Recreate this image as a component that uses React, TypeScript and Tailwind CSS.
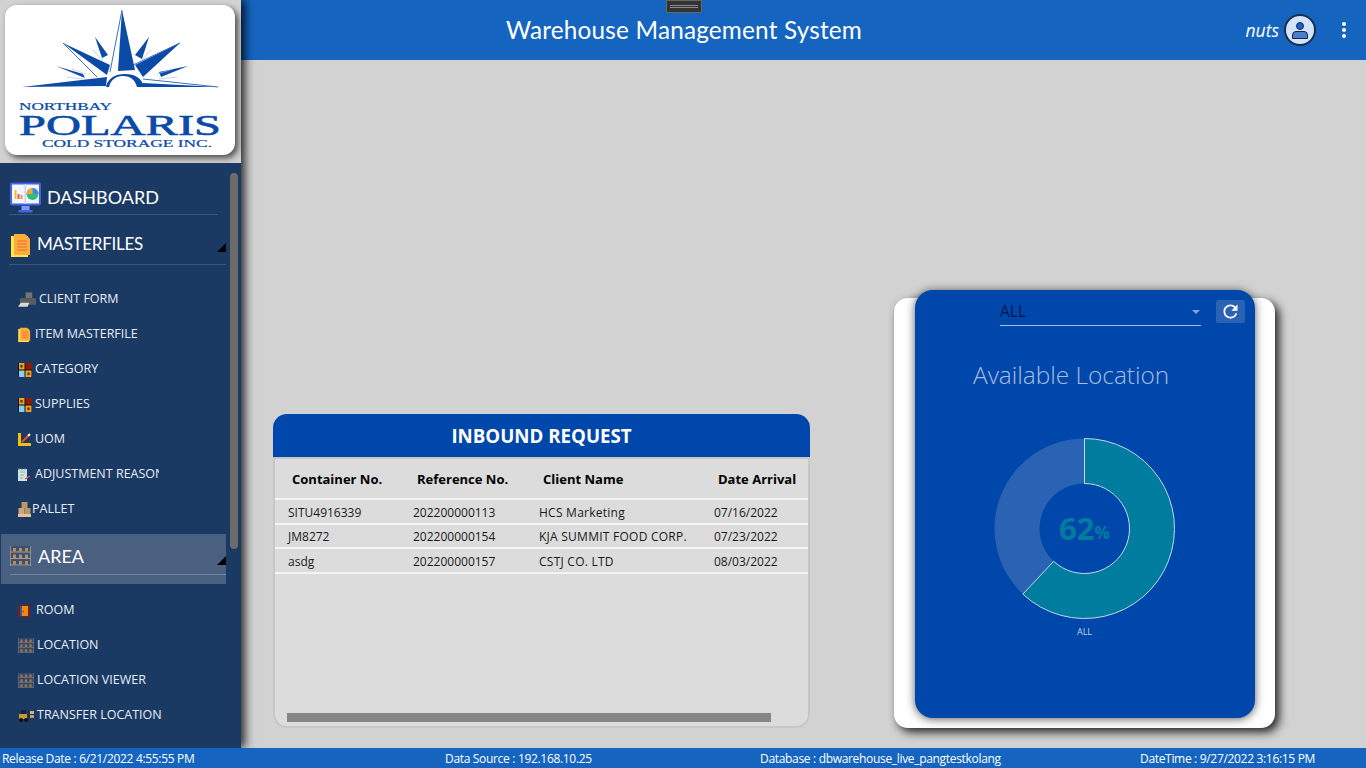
import { MdRefresh } from 'react-icons/md';

const ui = "font-['Open_Sans','Noto_Sans',sans-serif]";
const gothic = "font-['Lato','Noto_Sans',sans-serif]";

const inboundRows = [
  { container: 'SITU4916339', reference: '202200000113', client: 'HCS Marketing', arrival: '07/16/2022' },
  { container: 'JM8272', reference: '202200000154', client: 'KJA SUMMIT FOOD CORP.', arrival: '07/23/2022' },
  { container: 'asdg', reference: '202200000157', client: 'CSTJ CO. LTD', arrival: '08/03/2022' },
];

function Logo() {
  return (
    <svg viewBox="0 0 230 150" className="w-full h-full">
      <g fill="#0b4ba8">
        <polygon points="117,5 130,65 113,66" />
        <polygon points="58,38 105,60 102,70" />
        <polygon points="175,38 130,60 138,72" />
        <polygon points="90,32 103,50 97,53" />
        <polygon points="144,32 130,50 137,54" />
        <polygon points="51,61 78,69 80,73" />
        <polygon points="183,61 154,67 156,72" />
        <polygon points="17,82 102,72 101,81" />
        <polygon points="138,78 213,82 138,82" />
        <path d="M101 82 C103 73 110 69 120 69 C130 69 137 73 139 82 L132 82 C130 75 126 71 118 71 C110 71 106 75 104 82 Z" />
      </g>
      <g fill="none" stroke="#0b4ba8" strokeWidth="0.8">
        <path d="M117 5 L105 67 M58 38 L92 72 M175 38 L128 60 M138 74 L213 82" />
      </g>
      <g fill="none" stroke="#a9c1e6" strokeWidth="0.7">
        <path d="M88 45 L98 56 M146 45 L136 56 M67 64 L81 69 M168 64 L152 69 M62 72 L78 74 M172 72 L154 74" />
      </g>
      <g fontFamily="'Liberation Serif', serif" fill="#0b4ba8" stroke="#0b4ba8">
        <text x="14" y="105" fontSize="10" strokeWidth="0.2" textLength="93" lengthAdjust="spacingAndGlyphs">NORTHBAY</text>
        <text x="14" y="130" fontSize="30" strokeWidth="0.6" textLength="202" lengthAdjust="spacingAndGlyphs">POLARIS</text>
        <text x="37" y="142" fontSize="10" strokeWidth="0.2" textLength="170" lengthAdjust="spacingAndGlyphs">COLD STORAGE INC.</text>
      </g>
    </svg>
  );
}

function MonitorIcon() {
  return (
    <svg viewBox="0 0 32 31" className="w-[33px] h-[31px] shrink-0">
      <rect x="0.5" y="0.5" width="31" height="23" rx="2" fill="#4660e6" />
      <rect x="2.5" y="2.5" width="27" height="19" fill="#f2f4ff" />
      <rect x="15" y="2" width="1.5" height="20" fill="#c9d2f5" />
      <rect x="5" y="8" width="2" height="9" fill="#e9c23a" />
      <rect x="8" y="12" width="2" height="5" fill="#e5604a" />
      <rect x="11" y="13" width="2" height="4" fill="#e09a4c" />
      <circle cx="23" cy="12" r="6" fill="#2ebd75" />
      <path d="M23 12 V6 A6 6 0 0 1 29 12 Z" fill="#4a82e0" />
      <path d="M23 12 H17 A6 6 0 0 1 23 6 Z" fill="#f0a93a" />
      <rect x="12" y="24" width="8" height="4" fill="#7f9bf5" />
      <rect x="9" y="28" width="14" height="2.5" fill="#4660e6" />
    </svg>
  );
}

function NoteIcon({ big }: { big?: boolean }) {
  return (
    <svg viewBox="0 0 20 24" className={big ? 'w-[20px] h-[24px] shrink-0' : 'w-[13px] h-[15px] shrink-0'}>
      <rect x="0" y="3" width="17" height="21" fill="#ffe34d" />
      <path d="M3 1 H14 L19 6 V22 H3 Z" fill="#fbae3c" />
      <path d="M6 8 H16 M6 11 H16 M6 14 H16 M6 17 H16" stroke="#f0663c" strokeWidth="1.2" />
    </svg>
  );
}

function GridBoxIcon() {
  return (
    <svg viewBox="0 0 14 14" className="w-[14px] h-[14px] shrink-0">
      <rect width="14" height="14" fill="#101018" />
      <rect x="1" y="0" width="5.5" height="6.5" fill="#f0a020" />
      <rect x="2.5" y="2" width="2" height="2.5" fill="#3a2a10" />
      <rect x="7.5" y="0" width="6.5" height="6.5" fill="#8c1c08" />
      <rect x="1" y="7.5" width="5.5" height="6.5" fill="#86d0f4" />
      <rect x="7.5" y="7.5" width="6" height="6.5" fill="#f0a020" />
      <rect x="9.5" y="9.5" width="2" height="2.5" fill="#3a2a10" />
    </svg>
  );
}

function PrinterIcon() {
  return (
    <svg viewBox="0 0 20 16" className="w-[19px] h-[16px] shrink-0">
      <rect x="8" y="0" width="7" height="6" fill="#747474" />
      <path d="M2 6 H19 V13 H2 Z" fill="#5c5c5c" />
      <path d="M0 15 L3 11 H12 L10 15 Z" fill="#d8d8d8" />
    </svg>
  );
}

function RulerIcon() {
  return (
    <svg viewBox="0 0 13 13" className="w-[13px] h-[13px] shrink-0">
      <path d="M0 0 H3 V10 H13 V13 H0 Z" fill="#f2be10" />
      <path d="M4 9 L11 2" stroke="#e5502f" strokeWidth="2" />
      <path d="M10 3 L12 1" stroke="#f4f4f4" strokeWidth="2" />
    </svg>
  );
}

function ClipboardIcon() {
  return (
    <svg viewBox="0 0 13 13" className="w-[13px] h-[13px] shrink-0">
      <rect x="0" y="1" width="9" height="12" fill="#cfe3e6" />
      <path d="M1 0 V2 M4 0 V2 M7 0 V2" stroke="#5e7f86" strokeWidth="1" />
      <path d="M2 4 H7 M2 7 H6 M2 10 H5" stroke="#86bf7a" strokeWidth="1" />
      <path d="M7 11 L12 8" stroke="#d8566a" strokeWidth="1.4" />
    </svg>
  );
}

function BoxesIcon() {
  return (
    <svg viewBox="0 0 13 15" className="w-[13px] h-[15px] shrink-0">
      <rect x="3.5" y="0" width="6" height="6" fill="#b99667" />
      <rect x="0.5" y="6" width="6" height="6" fill="#cfa877" />
      <rect x="6.5" y="6" width="6" height="6" fill="#b99667" />
      <rect x="0" y="12" width="13" height="3" fill="#e2c49a" />
    </svg>
  );
}

function DoorIcon() {
  return (
    <svg viewBox="0 0 12 12" className="w-[12px] h-[12px] shrink-0">
      <rect x="0" y="0" width="12" height="12" fill="#7f1d12" />
      <rect x="2" y="1" width="2" height="10" fill="#2b58a8" />
      <rect x="4" y="1" width="6" height="10" fill="#f28a10" />
      <rect x="5" y="6" width="1" height="1" fill="#2a1a08" />
    </svg>
  );
}

function ShelfIcon({ big }: { big?: boolean }) {
  return (
    <svg viewBox="0 0 21 20" className={big ? 'w-[21px] h-[20px] shrink-0' : 'w-[16px] h-[15px] shrink-0'}>
      <rect width="21" height="20" fill={big ? '#3a5075' : '#34496a'} />
      <path d="M0.5 0 V20 M20.5 0 V20" stroke={big ? '#8a8a8a' : '#6a6a6a'} />
      <path d="M0 6 H21 M0 12.5 H21 M0 19 H21" stroke={big ? '#a0a0a0' : '#7a7a7a'} />
      <g fill={big ? '#c08a4a' : '#a0764a'}>
        <rect x="3" y="2" width="3" height="3.5" />
        <rect x="9" y="2" width="3" height="3.5" />
        <rect x="15" y="2" width="3" height="3.5" />
        <rect x="3" y="8.5" width="3" height="3.5" />
        <rect x="9" y="8.5" width="3" height="3.5" />
        <rect x="15" y="8.5" width="3" height="3.5" />
        <rect x="3" y="15" width="3" height="3.5" />
        <rect x="9" y="15" width="3" height="3.5" />
        <rect x="15" y="15" width="3" height="3.5" />
      </g>
    </svg>
  );
}

function ForkliftIcon() {
  return (
    <svg viewBox="0 0 16 12" className="w-[16px] h-[12px] shrink-0">
      <rect x="1" y="4" width="8" height="5" fill="#c89a3c" />
      <rect x="3" y="0" width="5" height="4" fill="#16233a" />
      <rect x="10" y="0" width="1" height="11" fill="#2a2a2a" />
      <rect x="12" y="1" width="4" height="3" fill="#d8b080" />
      <rect x="12" y="5" width="4" height="3" fill="#c49a68" />
      <circle cx="3" cy="10" r="2" fill="#101010" />
      <circle cx="8" cy="10" r="2" fill="#101010" />
    </svg>
  );
}

function GroupHeader({ icon, label, className, labelClass }: { icon: React.ReactNode; label: string; className: string; labelClass: string }) {
  return (
    <div className={`flex items-center ${className}`}>
      {icon}
      <span className={`${gothic} ${labelClass} leading-none text-white`}>{label}</span>
      <span className="ml-auto w-0 h-0 border-l-[9px] border-l-transparent border-b-[9px] border-b-black mt-[8px]" />
    </div>
  );
}

function SubItem({ icon, label, iconClass, clip }: { icon: React.ReactNode; label: string; iconClass: string; clip?: boolean }) {
  return (
    <div className="h-[35px] flex items-center pl-[17px]">
      <div className={`flex items-center ${iconClass}`}>{icon}</div>
      <span className={`${ui} text-[12.5px] text-[#e8edf5] whitespace-nowrap ${clip ? 'overflow-hidden w-[124px]' : ''}`}>{label}</span>
    </div>
  );
}

function Sidebar() {
  return (
    <aside className="w-[241px] shrink-0 flex flex-col z-20 shadow-[4px_0_9px_rgba(0,0,0,0.8)] bg-[#d2d2d2]">
      <div className="h-[163px] shrink-0 p-[5px] pb-[8px]">
        <div className="w-[230px] h-[150px] bg-white rounded-[12px] shadow-[3px_3px_6px_rgba(0,0,0,0.65)] overflow-hidden">
          <Logo />
        </div>
      </div>
      <div className="flex-1 min-h-0 bg-[#1b3a63] flex overflow-hidden">
        <nav className="w-[226px] shrink-0 pl-[1px] pt-[18px]">
          <div className="ml-[8px] mr-[8px] h-[34px] flex items-center gap-[5px] border-b border-[#3c5680]">
            <MonitorIcon />
            <span className={`${gothic} text-[18px] leading-none text-white pb-[2px]`}>DASHBOARD</span>
          </div>
          <GroupHeader
            icon={<span className="mr-[6px] mt-[4px]"><NoteIcon big /></span>}
            label="MASTERFILES"
            labelClass="text-[17px] tracking-[-0.3px]"
            className="ml-[8px] mt-[13px] h-[37px] pb-[6px] pl-[2px] border-b border-[#3c5680]"
          />
          <div className="pt-[17px]">
            <SubItem icon={<PrinterIcon />} label="CLIENT FORM" iconClass="w-[21px]" />
            <SubItem icon={<NoteIcon />} label="ITEM MASTERFILE" iconClass="w-[17px]" />
            <SubItem icon={<GridBoxIcon />} label="CATEGORY" iconClass="w-[17px]" />
            <SubItem icon={<GridBoxIcon />} label="SUPPLIES" iconClass="w-[17px]" />
            <SubItem icon={<RulerIcon />} label="UOM" iconClass="w-[17px]" />
            <SubItem icon={<ClipboardIcon />} label="ADJUSTMENT REASON" iconClass="w-[17px]" clip />
            <SubItem icon={<BoxesIcon />} label="PALLET" iconClass="w-[14px]" />
          </div>
          <div className="h-[50px] mt-[7px] bg-[#4a6080] pt-[12px]">
            <GroupHeader
              icon={<span className="mr-[7px] flex"><ShelfIcon big /></span>}
              label="AREA"
              labelClass="text-[18px]"
              className="ml-[9px] h-[29px] pb-[8px] border-b border-[#6f86a6]"
            />
          </div>
          <div className="pt-[9px]">
            <SubItem icon={<DoorIcon />} label="ROOM" iconClass="w-[18px]" />
            <SubItem icon={<ShelfIcon />} label="LOCATION" iconClass="w-[19px]" />
            <SubItem icon={<ShelfIcon />} label="LOCATION VIEWER" iconClass="w-[19px]" />
            <SubItem icon={<ForkliftIcon />} label="TRANSFER LOCATION" iconClass="w-[19px]" />
          </div>
        </nav>
        <div className="ml-[4px] mt-[10px] w-[8px] h-[376px] rounded-full bg-[#6b6b6b]" />
      </div>
    </aside>
  );
}

function Header() {
  return (
    <header className="relative h-[60px] shrink-0 bg-[#1565c0] flex items-center pl-[265px] pr-[20px]">
      <div className="absolute left-[425px] top-0 w-[36px] h-[13px] bg-[#333333] border border-[#666666] flex flex-col justify-center gap-[1px] px-[3px]">
        <div className="h-px bg-[#8a8a8a]" />
        <div className="h-px bg-[#8a8a8a]" />
      </div>
      <h1 className={`${gothic} text-[24.3px] text-white tracking-[0.2px]`}>Warehouse Management System</h1>
      <span className={`${ui} ml-auto italic text-[17.5px] text-white`}>nuts</span>
      <div className="ml-[5px] w-[32px] h-[32px] rounded-full bg-[#d3e3fa] border-2 border-[#1a2d4a] flex flex-col items-center justify-center">
        <span className="w-[8px] h-[8px] rounded-full bg-[#1d5fd0] border border-[#13294a]" />
        <span className="w-[16px] h-[8px] mt-[1px] rounded-t-[4px] bg-[#4a7ec8] border border-[#13294a]" />
      </div>
      <div className="ml-[26px] flex flex-col gap-[2px]">
        <span className="w-[4px] h-[4px] rounded-full bg-white" />
        <span className="w-[4px] h-[4px] rounded-full bg-white" />
        <span className="w-[4px] h-[4px] rounded-full bg-white" />
      </div>
    </header>
  );
}

function InboundCard() {
  return (
    <section className={`${ui} w-[537px] h-[314px] rounded-[14px] flex flex-col overflow-hidden`}>
      <div className="h-[43px] shrink-0 bg-[#0047ab] flex items-center justify-center pt-px">
        <h2 className="text-[18.7px] font-bold text-white">INBOUND REQUEST</h2>
      </div>
      <div className="flex-1 min-h-0 flex flex-col bg-[#dcdcdc] border-2 border-[#c6c6c6] rounded-b-[14px]">
        <div className="h-[41px] shrink-0 grid grid-cols-[125px_126px_175px_1fr] items-center pt-[2px] px-[17px] border-b-2 border-[#f4f4f4] text-[13px] font-bold text-black whitespace-nowrap">
          <span>Container No.</span>
          <span>Reference No.</span>
          <span>Client Name</span>
          <span>Date Arrival</span>
        </div>
        <div>
          {inboundRows.map((row) => (
            <div key={row.reference} className="h-[24.5px] grid grid-cols-[125px_126px_175px_1fr] items-center pt-[3px] px-[13px] border-b-2 border-[#f4f4f4] text-[12px] text-[#1a1a1a]">
              <span>{row.container}</span>
              <span>{row.reference}</span>
              <span className="whitespace-nowrap tracking-[0.25px]">{row.client}</span>
              <span>{row.arrival}</span>
            </div>
          ))}
        </div>
        <div className="mt-auto mb-[4px] ml-[12px] w-[484px] h-[9px] bg-[#868686]" />
      </div>
    </section>
  );
}

function Donut() {
  // 62% slice, clockwise from 12 o'clock
  const percent = 62;
  const angle = (percent / 100) * 2 * Math.PI;
  const outer = 90;
  const inner = 45;
  const c = 91.5;
  const ox = c + outer * Math.sin(angle);
  const oy = c - outer * Math.cos(angle);
  const ix = c + inner * Math.sin(angle);
  const iy = c - inner * Math.cos(angle);
  return (
    <div className="relative w-[183px] h-[183px]">
      <svg viewBox="0 0 183 183" className="w-full h-full">
        <path
          d={`M${c} ${c - outer} A${outer} ${outer} 0 0 0 ${ox} ${oy} L${ix} ${iy} A${inner} ${inner} 0 0 1 ${c} ${c - inner} Z`}
          fill="#2a63b3"
        />
        <path
          d={`M${c} ${c - outer} A${outer} ${outer} 0 1 1 ${ox} ${oy} L${ix} ${iy} A${inner} ${inner} 0 1 0 ${c} ${c - inner} Z`}
          fill="#007c9e"
          stroke="#c4d8ea"
          strokeWidth="1"
        />
      </svg>
      <div className={`${ui} absolute inset-0 flex items-center justify-center text-[#007c9e] font-bold`}>
        <span className="text-[31px] leading-none">62</span>
        <span className="text-[17px] leading-none mt-[8px]">%</span>
      </div>
    </div>
  );
}

function LocationCard() {
  return (
    <div className="w-[381px] h-[430px] bg-white rounded-[14px] shadow-[4px_4px_10px_rgba(0,0,0,0.85)] px-[21px]">
      <section className={`${ui} -mt-[8px] w-[340px] h-[428px] bg-[#0047ab] rounded-[18px] shadow-[0_1px_10px_rgba(0,0,0,0.65)] flex flex-col relative`}>
        <div className="flex items-start pt-[10px] pl-[85px]">
          <div className="w-[201px] h-[26px] border-b border-[#a8bddf] flex items-center justify-between pr-[1px] pb-px">
            <span className="text-[15.5px] text-[#06154a]">ALL</span>
            <span className="w-0 h-0 border-x-[4px] border-x-transparent border-t-[4px] border-t-[#8ea6d2]" />
          </div>
          <div className="ml-[15px] w-[29px] h-[23px] rounded-[2px] bg-[#2a63b3] flex items-center justify-center">
            <MdRefresh className="w-[21px] h-[21px] text-white" />
          </div>
        </div>
        <h3 className="mt-[31px] pl-[58px] text-[24.4px] font-light text-[#a9bde0] whitespace-nowrap">Available Location</h3>
        <div className="mt-[43px] pl-[78px]">
          <Donut />
        </div>
        <p className="ml-[78px] w-[183px] mt-[5px] text-center text-[9px] text-[#c4d0e6]">ALL</p>
      </section>
    </div>
  );
}

function StatusBar() {
  return (
    <footer className={`${ui} h-[20px] shrink-0 bg-[#1565c0] flex items-center pl-[2px] pt-px text-[12px] tracking-[-0.32px] text-white whitespace-nowrap z-30`}>
      <span className="w-[443px]">Release Date : 6/21/2022 4:55:55 PM</span>
      <span className="w-[315px]">Data Source : 192.168.10.25</span>
      <span className="w-[380px]">Database : dbwarehouse_live_pangtestkolang</span>
      <span>DateTime : 9/27/2022 3:16:15 PM</span>
    </footer>
  );
}

export default function App() {
  return (
    <div className="w-[1366px] h-[768px] flex flex-col overflow-hidden bg-[#d2d2d2]">
      <div className="flex-1 min-h-0 flex">
        <Sidebar />
        <main className="flex-1 min-w-0 flex flex-col">
          <Header />
          <div className="flex-1 min-h-0 flex items-end justify-between pl-[32px] pr-[91px] pb-[20px]">
            <InboundCard />
            <LocationCard />
          </div>
        </main>
      </div>
      <StatusBar />
    </div>
  );
}
